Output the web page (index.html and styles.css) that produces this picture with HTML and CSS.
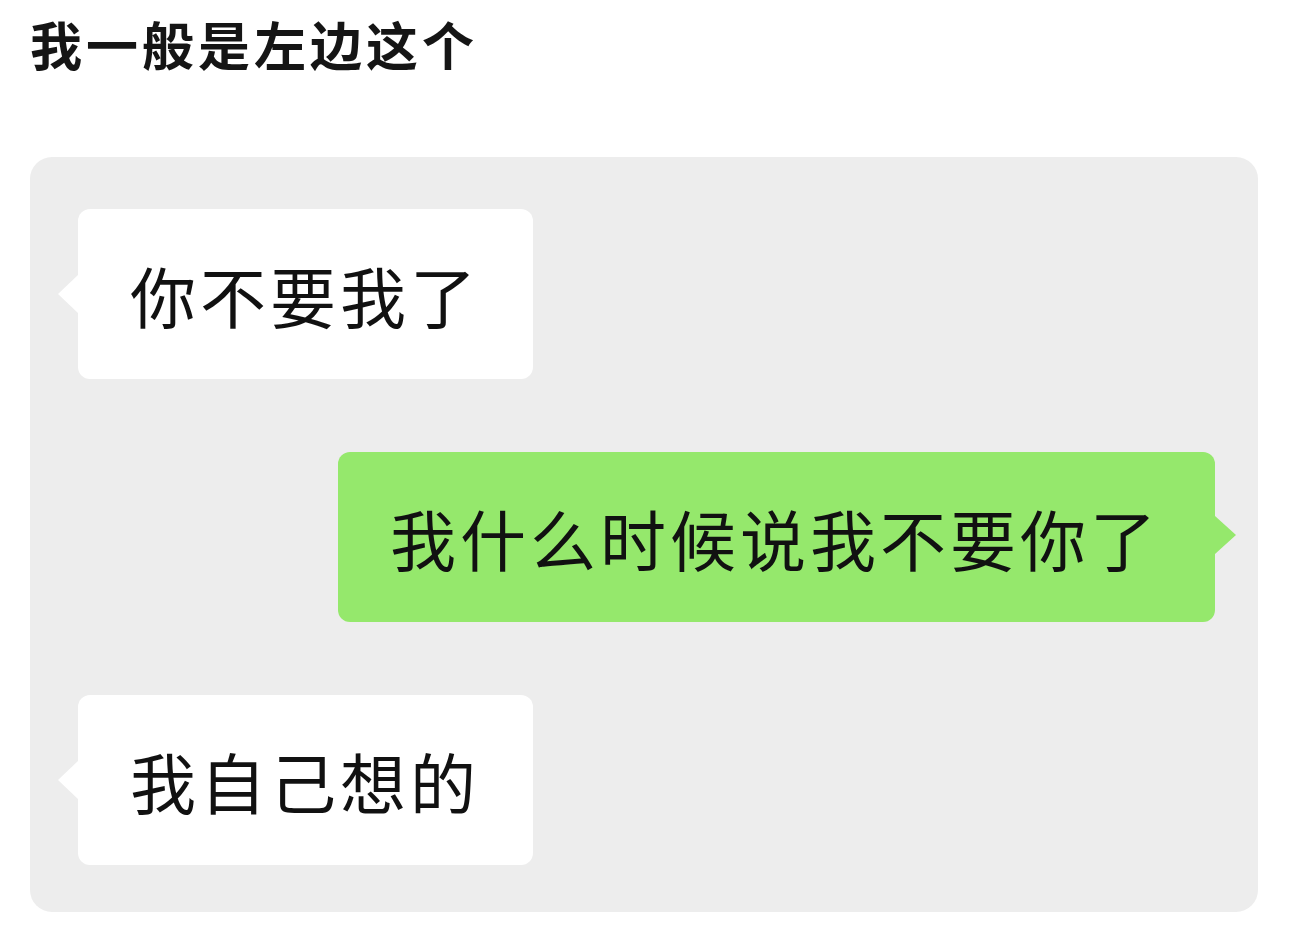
FILE: index.html
```html
<html>
<head>
    <meta charset="utf-8">
    <link rel="stylesheet" href="styles.css">
</head>
<body>
<div class="title">我一般是左边这个</div>

<div class="chat">
    <div class="row left">
        <div class="bubble white">你不要我了</div>
    </div>
    <div class="row right">
        <div class="bubble green">我什么时候说我不要你了</div>
    </div>
    <div class="row left">
        <div class="bubble white">我自己想的</div>
    </div>
</div>
</body>
</html>
```

FILE: styles.css
```css
html, body {
    margin: 0;
    background: #fff;
    font-family: "Noto Sans CJK SC", "Noto Sans", sans-serif;
    color: #111;
}

.title {
    padding: 13px 0 0 30px;
    font-size: 52px;
    line-height: 62px;
    font-weight: bold;
    letter-spacing: 4px;
    color: #151515;
}

.chat {
    margin: 82px 32px 0 30px;
    background: #ededed;
    border-radius: 22px;
    padding: 52px 43px 47px 48px;
    display: flex;
    flex-direction: column;
    gap: 73px;
}

.row {
    display: flex;
}

.row.right {
    justify-content: flex-end;
}

.bubble {
    position: relative;
    font-size: 66px;
    line-height: 66px;
    letter-spacing: 4px;
    white-space: nowrap;
    padding: 52px 55px 52px 52px;
    border-radius: 12px;
}

.white {
    background: #fff;
    box-sizing: border-box;
    width: 455px;
}

.green {
    background: #95e86c;
}

/* little pointer on the side of each bubble */
.bubble::before {
    content: "";
    position: absolute;
    top: 66px;
    width: 0;
    height: 0;
    border-top: 19px solid transparent;
    border-bottom: 19px solid transparent;
}

.white::before {
    left: -20px;
    border-right: 20px solid #fff;
}

.green::before {
    right: -21px;
    top: 64px;
    border-left: 21px solid #95e86c;
}
```
